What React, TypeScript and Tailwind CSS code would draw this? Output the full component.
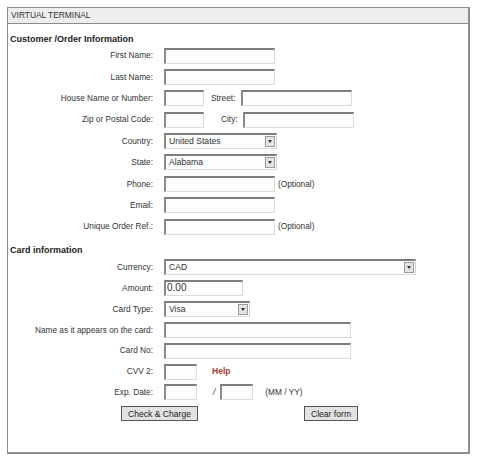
import React from "react"

const font = { fontFamily: '"Liberation Sans", Arial, sans-serif' }

function TextBox({ w, value }: { w: number; value?: string }) {
  return (
    <div
      className="h-[16px] shrink-0 border-t-2 border-l-2 border-r border-b border-t-[#7d7d7d] border-l-[#8a8a8a] border-r-[#dcdcdc] border-b-[#dcdcdc] bg-[#fdfdfd] px-[1px] text-[10px] leading-[12px] text-[#333]"
      style={{ width: w }}
    >
      {value}
    </div>
  )
}

function Select({ w, value }: { w: number; value: string }) {
  return (
    <div
      className="flex h-[16px] shrink-0 items-stretch border-t-2 border-l-2 border-r border-b border-t-[#7d7d7d] border-l-[#8a8a8a] border-r-[#cfcfcf] border-b-[#dcdcdc] bg-[#fdfdfd]"
      style={{ width: w }}
    >
      <div className="flex-1 pl-[3px] text-[8.6px] leading-[13px] text-[#333]">{value}</div>
      <div className="my-[1px] mr-[1px] flex w-[10px] items-center justify-center border border-[#9a9a9a] bg-[#e4e4e4]">
        <div className="h-0 w-0 border-x-[2.5px] border-t-[3px] border-x-transparent border-t-[#333]" />
      </div>
    </div>
  )
}

function Row({ label, children }: { label: string; children: React.ReactNode }) {
  return (
    <div className="flex h-[16px] items-center">
      <div className="w-[145px] shrink-0 text-right text-[8.3px] text-[#333]">{label}</div>
      <div className="ml-[11px] flex items-center">{children}</div>
    </div>
  )
}

function Note({ children, ml = 3 }: { children: React.ReactNode; ml?: number }) {
  return (
    <span className="text-[8.3px] text-[#333]" style={{ marginLeft: ml }}>
      {children}
    </span>
  )
}

export default function App() {
  return (
    <div className="h-[459px] w-[477px] bg-white pl-[7px] pt-[7px]" style={font}>
      <div className="h-[447px] w-[463px] border border-[#8c8c8c] border-r-2 border-b-2">
        {/* Header */}
        <div className="flex h-[16px] items-center border-b border-[#8a8a8a] bg-[#ededed] pl-[3px] text-[8.4px] text-[#333]">
          VIRTUAL TERMINAL
        </div>

        {/* Customer section */}
        <div className="mt-[9px] pl-[2px] text-[9px] font-bold text-[#222]">Customer /Order Information</div>
        <div className="mt-[1px] flex flex-col gap-[5.4px]">
          <Row label="First Name:">
            <TextBox w={111} />
          </Row>
          <Row label="Last Name:">
            <TextBox w={111} />
          </Row>
          <Row label="House Name or Number:">
            <TextBox w={40} />
            <Note ml={7}>Street:</Note>
            <div className="ml-[6px]">
              <TextBox w={111} />
            </div>
          </Row>
          <Row label="Zip or Postal Code:">
            <TextBox w={40} />
            <div className="ml-[17px] text-[8.3px] text-[#333]">City:</div>
            <div className="ml-[5px]">
              <TextBox w={111} />
            </div>
          </Row>
          <Row label="Country:">
            <Select w={113} value="United States" />
          </Row>
          <Row label="State:">
            <Select w={113} value="Alabama" />
          </Row>
          <Row label="Phone:">
            <TextBox w={111} />
            <Note>(Optional)</Note>
          </Row>
          <Row label="Email:">
            <TextBox w={111} />
          </Row>
          <Row label="Unique Order Ref.:">
            <TextBox w={111} />
            <Note>(Optional)</Note>
          </Row>
        </div>

        {/* Card section */}
        <div className="mt-[9px] pl-[2px] text-[9px] font-bold text-[#222]">Card information</div>
        <div className="mt-[2px] flex flex-col gap-[4.9px]">
          <Row label="Currency:">
            <Select w={252} value="CAD" />
          </Row>
          <Row label="Amount:">
            <TextBox w={79} value="0.00" />
          </Row>
          <Row label="Card Type:">
            <Select w={86} value="Visa" />
          </Row>
          <Row label="Name as it appears on the card:">
            <TextBox w={187} />
          </Row>
          <Row label="Card No:">
            <TextBox w={187} />
          </Row>
          <Row label="CVV 2:">
            <TextBox w={33} />
            <span className="ml-[15px] text-[8.6px] font-bold text-[#a33a3a]">Help</span>
          </Row>
          <Row label="Exp. Date:">
            <TextBox w={33} />
            <span className="ml-[16px] text-[8.3px] italic text-[#333]">/</span>
            <div className="ml-[5px]">
              <TextBox w={33} />
            </div>
            <span className="ml-[12px] text-[8.3px] text-[#333]">(MM / YY)</span>
          </Row>
        </div>
        <div className="mt-[6px] flex h-[15px]">
          <button className="ml-[113px] h-[15px] w-[77px] border border-[#555] bg-[#e2e2e2] text-[8.6px] leading-[12px] text-[#222]">
            Check &amp; Charge
          </button>
          <button className="ml-[106px] h-[15px] w-[54px] border border-[#555] bg-[#e2e2e2] text-[8.6px] leading-[12px] text-[#222]">
            Clear form
          </button>
        </div>
      </div>
    </div>
  )
}
